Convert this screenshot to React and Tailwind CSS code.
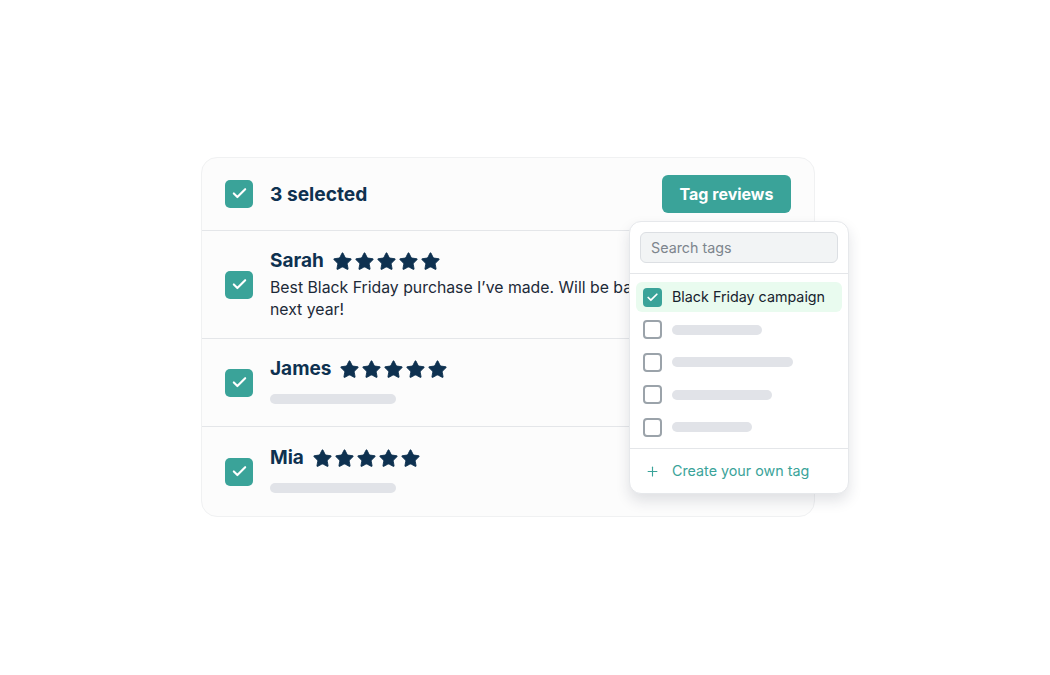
import { Check, Plus, Star } from "lucide-react";

const font = { fontFamily: "Inter, 'Noto Sans', sans-serif" };

// --- CHECKBOXES ---
const BigCheck = () => (
  <div className="w-7 h-7 shrink-0 rounded-[5px] bg-[#3aa399] flex items-center justify-center">
    <Check size={17} strokeWidth={3} className="text-white" />
  </div>
);

const SmallCheck = ({ checked }) =>
  checked ? (
    <div className="w-[19px] h-[19px] shrink-0 rounded-[4px] bg-[#3aa399] flex items-center justify-center">
      <Check size={13} strokeWidth={3.2} className="text-white" />
    </div>
  ) : (
    <div className="w-[19px] h-[19px] shrink-0 rounded-[4px] border-2 border-[#9ba3aa] bg-white" />
  );

const Stars = () => (
  <div className="flex items-center gap-[1px]">
    {[0, 1, 2, 3, 4].map((i) => (
      <Star key={i} size={21} className="text-[#0e3150] fill-[#0e3150]" strokeWidth={1} />
    ))}
  </div>
);

const ReviewRow = ({ name, text, height, last }) => (
  <div className={`flex items-center gap-[17px] px-[23px] ${height} ${last ? "" : "border-b border-[#e4e6e9]"}`}>
    <BigCheck />
    <div className={`flex flex-col ${text ? "" : "mb-[5px]"}`}>
      <div className="flex items-center gap-[8px] h-[26px]">
        <span className="text-[19px] font-bold text-[#0e3150]">{name}</span>
        <Stars />
      </div>
      {text ? (
        <p className="mt-[3px] w-[395px] text-[15.8px] leading-[22px] text-[#1c2a38]">{text}</p>
      ) : (
        <div className="mt-[11px] h-[10px] w-[126px] rounded-full bg-[#e1e3e8]" />
      )}
    </div>
  </div>
);

const bars = ["w-[90px]", "w-[121px]", "w-[100px]", "w-[80px]"];

export default function App() {
  return (
    <div className="w-[1050px] h-[675px] bg-white pt-[157px] pl-[201px]" style={font}>
      <div className="relative w-[614px] h-[360px] rounded-2xl border border-[#f0f1f2] bg-[#fcfcfc]">
        {/* header */}
        <div className="flex items-center justify-between h-[73px] px-[23px] border-b border-[#e4e6e9]">
          <div className="flex items-center gap-[17px]">
            <BigCheck />
            <span className="text-[19.2px] font-bold text-[#0e3150]">3 selected</span>
          </div>
          <button className="h-[38px] w-[129px] rounded-[6px] bg-[#3aa399] text-white text-[16px] font-bold">
            Tag reviews
          </button>
        </div>

        <ReviewRow
          name="Sarah"
          height="h-[108px]"
          text="Best Black Friday purchase I’ve made. Will be back next year!"
        />
        <ReviewRow name="James" height="h-[88px]" />
        <ReviewRow name="Mia" height="h-[89px]" last />

        {/* tag dropdown */}
        <div className="absolute left-[427px] top-[63px] w-[220px] rounded-xl border border-[#e6e8eb] bg-white shadow-[0_7px_14px_rgba(30,40,60,0.13)]">
          <div className="p-[10px] border-b border-[#e4e6e9]">
            <div className="h-[31px] rounded-[6px] border border-[#dcdfe3] bg-[#f2f4f5] px-[10px] flex items-center text-[14.3px] text-[#7d858d]">
              Search tags
            </div>
          </div>
          <div className="flex flex-col gap-[2.5px] px-[6px] pt-[8px] pb-[6px] border-b border-[#e4e6e9]">
            <div className="flex items-center gap-[10px] h-[30px] px-[7px] rounded-[6px] bg-[#e9fbef]">
              <SmallCheck checked />
              <span className="text-[14.3px] text-[#17222d]">Black Friday campaign</span>
            </div>
            {bars.map((w, i) => (
              <div key={i} className="flex items-center gap-[10px] h-[30px] px-[7px]">
                <SmallCheck />
                <div className={`h-[10px] ${w} rounded-full bg-[#e1e3e8]`} />
              </div>
            ))}
          </div>
          <div className="flex items-center gap-[12px] h-[44px] px-[15px] text-[14.3px] text-[#3aa399]">
            <Plus size={15} strokeWidth={1.8} />
            <span>Create your own tag</span>
          </div>
        </div>
      </div>
    </div>
  );
}
